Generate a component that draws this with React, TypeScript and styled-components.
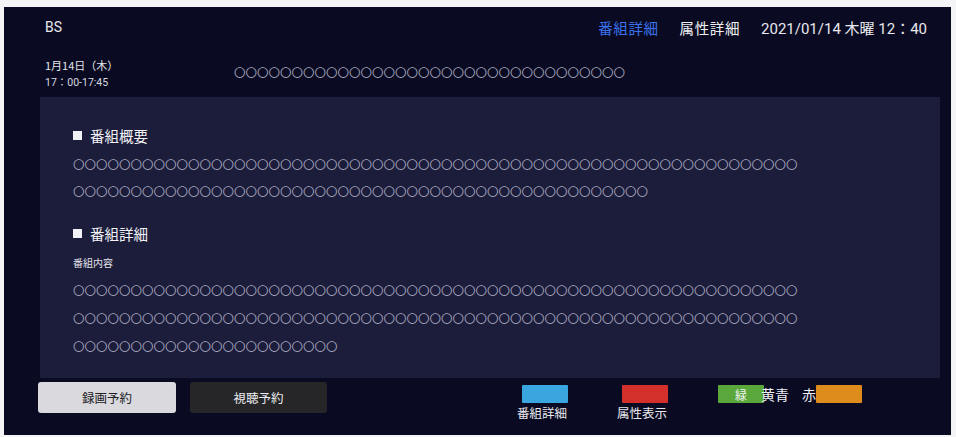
import React from "react";
import styled, { createGlobalStyle } from "styled-components";

const Global = createGlobalStyle`
  html, body { margin: 0; padding: 0; background: #ffffff; }
  body { font-family: "Noto Sans CJK JP", "Noto Sans", sans-serif; }
  #root { width: 956px; height: 437px; }
`;

const Frame = styled.div`
  width: 956px;
  height: 437px;
  box-sizing: border-box;
  padding: 7px 5px 2px 4px;
  background: #f4f4f6;
`;

const Screen = styled.div`
  width: 100%;
  height: 100%;
  background: #0a0b22;
  display: flex;
  flex-direction: column;
  color: #eeeef2;
`;

const Header = styled.div`
  height: 40px;
  flex: none;
  display: flex;
  align-items: center;
  padding: 0 24px 0 41px;
`;

const Channel = styled.div`
  font-family: "Roboto", "Noto Sans CJK JP", sans-serif;
  font-size: 14px;
  color: #e8e8ee;
`;

const HeaderRight = styled.div`
  margin-left: auto;
  display: flex;
  align-items: center;
  gap: 21px;
  font-size: 14.5px;
`;

const Tab = styled.span<{ $active?: boolean }>`
  color: ${(p) => (p.$active ? "#3a72ee" : "#f0f0f4")};
  letter-spacing: 0.6px;
`;

const Clock = styled.span`
  font-family: "Roboto", "Noto Sans CJK JP", sans-serif;
  font-size: 15px;
  color: #e8e8ee;
`;

const InfoRow = styled.div`
  height: 50px;
  flex: none;
  display: flex;
  align-items: center;
  padding-left: 41px;
`;

const DateBlock = styled.div`
  width: 189px;
  display: flex;
  flex-direction: column;
  gap: 4px;
  margin-top: 3px;
`;

const DateLine = styled.div`
  font-size: 11px;
  line-height: 14px;
  color: #e4e4ea;
`;

const TimeLine = styled.div`
  font-family: "Roboto", "Noto Sans CJK JP", sans-serif;
  font-size: 10.5px;
  line-height: 14px;
  color: #d8d8e0;
`;

const Circles = styled.div<{ $lh?: number }>`
  font-size: 11.5px;
  line-height: ${(p) => p.$lh ?? 27}px;
  color: #a4a4bc;
  white-space: nowrap;
  letter-spacing: 0;
`;

const Panel = styled.div`
  flex: none;
  height: 281px;
  margin: 0 11px 0 36px;
  background: #1c1c3b;
  box-sizing: border-box;
  padding: 28px 0 0 33px;
  display: flex;
  flex-direction: column;
`;

const SectionTitle = styled.div<{ $mt?: number }>`
  display: flex;
  align-items: center;
  gap: 8px;
  height: 20px;
  margin-top: ${(p) => p.$mt ?? 0}px;
  margin-bottom: 6px;
  font-size: 14.5px;
  color: #f2f2f6;
`;

const Square = styled.span`
  width: 9px;
  height: 9px;
  background: #f2f2f6;
  display: inline-block;
`;

const SubLabel = styled.div`
  font-size: 10px;
  line-height: 16px;
  color: #e4e4ea;
  margin-top: 6px;
  margin-bottom: 5px;
`;

const Footer = styled.div`
  flex: 1;
  display: flex;
  align-items: flex-start;
  padding: 4px 0 0 34px;
`;

const Button = styled.div<{ $light?: boolean }>`
  width: ${(p) => (p.$light ? 138 : 137)}px;
  height: 31px;
  margin-right: 14px;
  border-radius: 3px;
  background: ${(p) => (p.$light ? "#d9d9de" : "#262629")};
  color: ${(p) => (p.$light ? "#202024" : "#ececf0")};
  display: flex;
  align-items: center;
  justify-content: center;
  font-size: 12.5px;
`;

const Keys = styled.div`
  margin-left: 177px;
  display: flex;
  align-items: flex-start;
  padding-top: 3px;
`;

const KeyGroup = styled.div`
  width: 54px;
  display: flex;
  flex-direction: column;
  align-items: center;
  margin-right: 46px;
`;

const Swatch = styled.div<{ $color: string }>`
  width: 46px;
  height: 18px;
  background: ${(p) => p.$color};
  border-radius: 1px;
  display: flex;
  align-items: center;
  justify-content: center;
  font-size: 12px;
  color: #f4f4f4;
`;

const KeyLabel = styled.div`
  font-size: 12.5px;
  line-height: 14px;
  margin-top: 3px;
  color: #e8e8ee;
  white-space: nowrap;
  transform: translateX(-3px);
`;

const InlineKeys = styled.div`
  display: flex;
  align-items: center;
  height: 18px;
`;

const InlineText = styled.span<{ $ml?: number }>`
  font-size: 14px;
  color: #f0f0f4;
  margin-left: ${(p) => p.$ml ?? 0}px;
  white-space: nowrap;
`;

const circ = (n: number) => "〇".repeat(n);

export default function App() {
  return (
    <>
      <Global />
      <Frame>
        <Screen>
          <Header>
            <Channel>BS</Channel>
            <HeaderRight>
              <Tab $active>番組詳細</Tab>
              <Tab>属性詳細</Tab>
              <Clock>2021/01/14 木曜 12：40</Clock>
            </HeaderRight>
          </Header>
          <InfoRow>
            <DateBlock>
              <DateLine>1月14日（木）</DateLine>
              <TimeLine>17：00-17:45</TimeLine>
            </DateBlock>
            <Circles $lh={20}>{circ(34)}</Circles>
          </InfoRow>
          <Panel>
            <SectionTitle>
              <Square />
              番組概要
            </SectionTitle>
            <Circles>{circ(63)}</Circles>
            <Circles>{circ(50)}</Circles>
            <SectionTitle $mt={18}>
              <Square />
              番組詳細
            </SectionTitle>
            <SubLabel>番組内容</SubLabel>
            <Circles $lh={28}>{circ(63)}</Circles>
            <Circles $lh={28}>{circ(63)}</Circles>
            <Circles $lh={28}>{circ(23)}</Circles>
          </Panel>
          <Footer>
            <Button $light>録画予約</Button>
            <Button>視聴予約</Button>
            <Keys>
              <KeyGroup>
                <Swatch $color="#3aa6df" />
                <KeyLabel>番組詳細</KeyLabel>
              </KeyGroup>
              <KeyGroup>
                <Swatch $color="#d3302b" />
                <KeyLabel>属性表示</KeyLabel>
              </KeyGroup>
              <InlineKeys>
                <Swatch $color="#5aa83c">緑</Swatch>
                <InlineText $ml={-3}>黄青</InlineText>
                <InlineText $ml={13}>赤</InlineText>
                <Swatch $color="#de8c1c" />
              </InlineKeys>
            </Keys>
          </Footer>
        </Screen>
      </Frame>
    </>
  );
}
